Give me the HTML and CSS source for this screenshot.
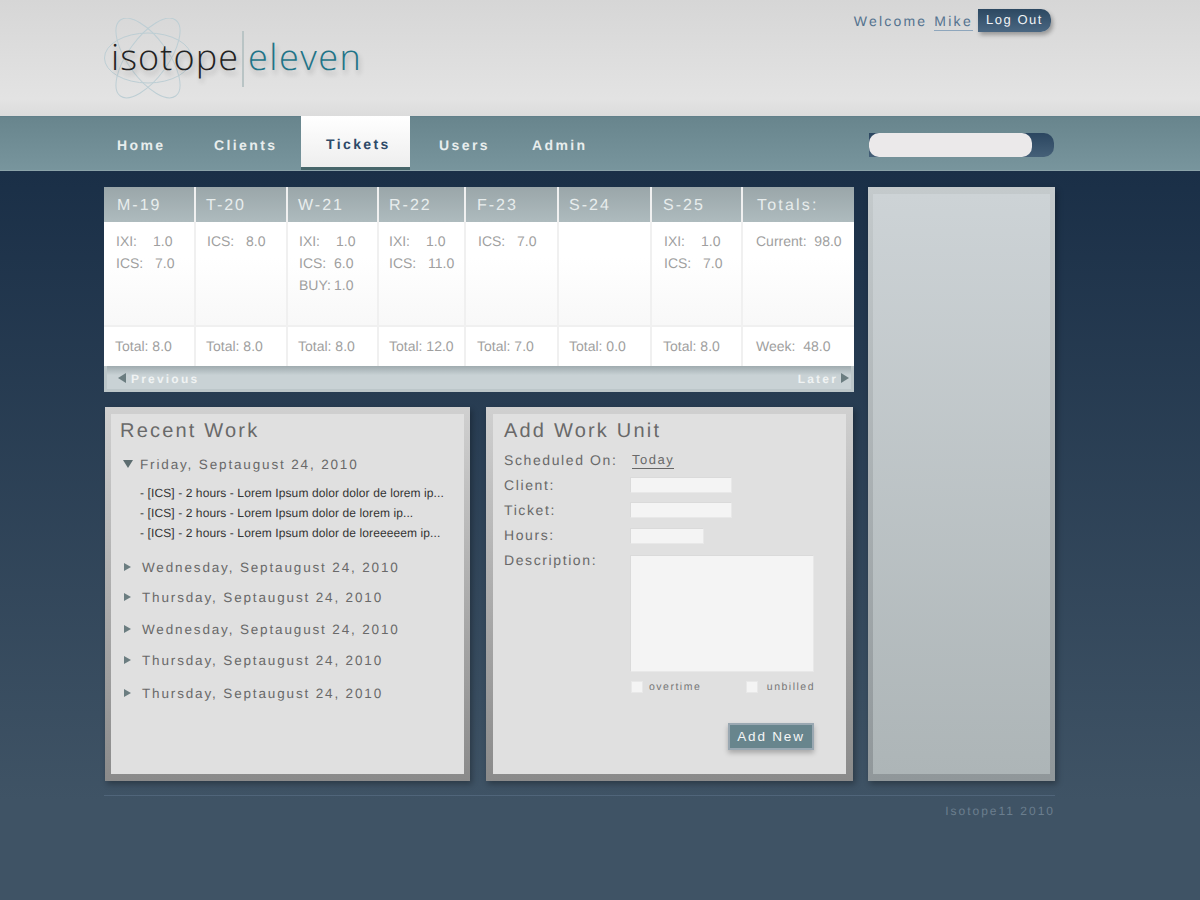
FILE: index.html
```html
<!DOCTYPE html>
<html lang="en">
<head>
    <meta charset="UTF-8">
    <title>Isotope Eleven</title>
    <link rel="stylesheet" href="styles.css">
</head>
<body>
<div id="header">
    <div class="wrap header-inner">
        <div class="logo">
            <svg class="logo-rings" width="90" height="82" viewBox="0 0 90 82">
                <g fill="none" stroke="#bdced4" stroke-width="1">
                    <ellipse cx="44" cy="40" rx="43.5" ry="25"/>
                    <ellipse cx="44" cy="40" rx="47" ry="20" transform="rotate(54 44 40)"/>
                    <ellipse cx="44" cy="40" rx="47" ry="20" transform="rotate(-54 44 40)"/>
                </g>
            </svg>
            <span class="logo-dark">isotope</span>
            <span class="logo-bar"></span>
            <span class="logo-teal">eleven</span>
        </div>
        <div class="welcome">
            <span>Welcome</span>
            <a class="user" href="#">Mike</a>
            <a class="logout" href="#">Log Out</a>
        </div>
    </div>
</div>
<div id="nav">
    <div class="wrap nav-inner">
        <ul class="menu">
            <li class="m-home"><a href="#">Home</a></li>
            <li class="m-clients"><a href="#">Clients</a></li>
            <li class="m-tickets active"><a href="#">Tickets</a></li>
            <li class="m-users"><a href="#">Users</a></li>
            <li class="m-admin"><a href="#">Admin</a></li>
        </ul>
        <div class="search"><input type="text"></div>
    </div>
</div>
<div class="wrap main">
    <div class="left">
        <div class="week">
            <div class="day">
                <div class="day-head">M-19</div>
                <div class="day-body"><p><span class="k">IXI:</span><span>1.0</span></p><p><span class="k ics">ICS:</span><span>7.0</span></p></div>
                <div class="day-total">Total: 8.0</div>
            </div>
            <div class="day">
                <div class="day-head">T-20</div>
                <div class="day-body"><p><span class="k ics">ICS:</span><span>8.0</span></p></div>
                <div class="day-total">Total: 8.0</div>
            </div>
            <div class="day">
                <div class="day-head">W-21</div>
                <div class="day-body"><p><span class="k">IXI:</span><span>1.0</span></p><p><span class="k tight">ICS:</span><span>6.0</span></p><p><span class="k tight">BUY:</span><span>1.0</span></p></div>
                <div class="day-total">Total: 8.0</div>
            </div>
            <div class="day">
                <div class="day-head">R-22</div>
                <div class="day-body"><p><span class="k">IXI:</span><span>1.0</span></p><p><span class="k ics">ICS:</span><span>11.0</span></p></div>
                <div class="day-total">Total: 12.0</div>
            </div>
            <div class="day">
                <div class="day-head">F-23</div>
                <div class="day-body"><p><span class="k ics">ICS:</span><span>7.0</span></p></div>
                <div class="day-total">Total: 7.0</div>
            </div>
            <div class="day">
                <div class="day-head">S-24</div>
                <div class="day-body"></div>
                <div class="day-total">Total: 0.0</div>
            </div>
            <div class="day">
                <div class="day-head">S-25</div>
                <div class="day-body"><p><span class="k">IXI:</span><span>1.0</span></p><p><span class="k ics">ICS:</span><span>7.0</span></p></div>
                <div class="day-total">Total: 8.0</div>
            </div>
            <div class="day totals">
                <div class="day-head">Totals:</div>
                <div class="day-body"><p>Current:&nbsp; 98.0</p></div>
                <div class="day-total">Week:&nbsp; 48.0</div>
            </div>
        </div>
        <div class="pager">
            <a href="#"><i class="tri-left"></i>Previous</a>
            <a href="#">Later<i class="tri-right"></i></a>
        </div>
        <div class="panels">
            <div class="panel">
                <div class="panel-in">
                    <h2>Recent Work</h2>
                    <div class="date open"><i class="tri-down"></i>Friday, Septaugust 24, 2010</div>
                    <ul class="work">
                        <li>- [ICS] - 2 hours - Lorem Ipsum dolor dolor de lorem ip...</li>
                        <li>- [ICS] - 2 hours - Lorem Ipsum dolor de lorem ip...</li>
                        <li>- [ICS] - 2 hours - Lorem Ipsum dolor de loreeeeem ip...</li>
                    </ul>
                    <div class="date"><i class="tri-small"></i>Wednesday, Septaugust 24, 2010</div>
                    <div class="date"><i class="tri-small"></i>Thursday, Septaugust 24, 2010</div>
                    <div class="date"><i class="tri-small"></i>Wednesday, Septaugust 24, 2010</div>
                    <div class="date"><i class="tri-small"></i>Thursday, Septaugust 24, 2010</div>
                    <div class="date"><i class="tri-small"></i>Thursday, Septaugust 24, 2010</div>
                </div>
            </div>
            <div class="panel">
                <div class="panel-in">
                    <h2>Add Work Unit</h2>
                    <form class="form">
                        <label>Scheduled On:</label><div class="today"><a href="#">Today</a></div>
                        <label>Client:</label><div><input class="inp up" type="text"></div>
                        <label>Ticket:</label><div><input class="inp up" type="text"></div>
                        <label>Hours:</label><div><input class="inp short" type="text"></div>
                        <label>Description:</label>
                        <div>
                            <textarea class="desc"></textarea>
                            <div class="checks">
                                <span><input type="checkbox">overtime</span>
                                <span><input type="checkbox">unbilled</span>
                            </div>
                            <div class="actions"><button type="button" class="add">Add New</button></div>
                        </div>
                    </form>
                </div>
            </div>
        </div>
    </div>
    <div class="side"><div class="side-in"></div></div>
</div>
<div class="wrap footer">Isotope11 2010</div>
</body>
</html>
```
FILE: styles.css
```css
* {
    padding: 0;
    margin: 0;
    list-style: none;
    box-sizing: border-box;
}
html, body {
    height: 900px;
    overflow: hidden;
}
body {
    font-family: "Liberation Sans", Arial, sans-serif;
    text-rendering: geometricPrecision;
    background: linear-gradient(#1a2f47 171px, #3f5365 800px);
}
a {
    text-decoration: none;
    color: inherit;
}
.wrap {
    width: 951px;
    margin-left: 104px;
}

/* header */
#header {
    height: 116px;
    background: linear-gradient(#d6d6d6, #e3e3e3 85%, #dcdcdc);
}
.header-inner {
    display: flex;
    justify-content: space-between;
    align-items: flex-start;
}
.logo {
    display: flex;
    align-items: center;
    height: 88px;
    margin-top: 15px;
    font-family: "Open Sans", sans-serif;
    font-weight: 300;
    font-size: 36px;
    letter-spacing: 1.1px;
    position: relative;
    padding-left: 7px;
}
.logo-rings {
    position: absolute;
    left: 0;
    top: 3px;
}
.logo-dark {
    margin-top: -6px;
    color: #222;
    text-shadow: 2px 4px 5px rgba(0, 0, 0, .2);
    position: relative;
}
.logo-teal {
    margin-top: -6px;
    letter-spacing: 1.5px;
    color: #1f7488;
    text-shadow: 2px 4px 5px rgba(0, 0, 0, .2);
    position: relative;
}
.logo-bar {
    width: 2px;
    height: 56px;
    margin: 0 4px 0 3px;
    background: #b9c4c5;
    position: relative;
}
.welcome {
    display: flex;
    align-items: flex-start;
    margin-top: 9px;
    padding-right: 4px;
    color: #55738f;
    font-size: 14px;
    letter-spacing: 2.2px;
}
.welcome > span {
    margin-top: 4px;
}
.user {
    margin: 4px 5px 0 7px;
    border-bottom: 1px solid #8ea6bc;
    line-height: 17px;
    letter-spacing: 2.3px;
}
.logout {
    width: 73px;
    height: 23px;
    line-height: 21px;
    text-align: center;
    font-size: 13px;
    letter-spacing: 1.5px;
    color: #f2f4f6;
    background: linear-gradient(#2c4861, #4a6782);
    border-radius: 0 10px 10px 0;
    box-shadow: 2px 3px 4px rgba(0, 0, 0, .3);
}

/* nav */
#nav {
    height: 55px;
    background: linear-gradient(#68858d, #78959d);
    border-top: 1px solid #62808a;
    border-bottom: 1px solid #8ba3a9;
}
.nav-inner {
    display: flex;
    justify-content: space-between;
}
.menu {
    display: flex;
    font-size: 14px;
    font-weight: bold;
    letter-spacing: 2.4px;
    color: #e8eded;
}
.menu a {
    display: block;
    padding-top: 20px;
}
.m-home { width: 110px; padding-left: 13px; }
.m-clients { width: 87px; }
.m-tickets { width: 109px; }
.m-users { width: 93px; padding-left: 29px; }
.m-admin { padding-left: 29px; }
.menu .active {
    height: 54px;
    margin-top: -1px;
    background: linear-gradient(#fff, #eee);
    border-bottom: 3px solid #47666a;
    padding-left: 25px;
    color: #2e4a68;
}
.search {
    width: 185px;
    height: 24px;
    margin: 16px 1px 0 0;
    border-radius: 0 10px 10px 0;
    background: linear-gradient(#2b4660, #456078);
}
.search input {
    display: block;
    width: 163px;
    height: 24px;
    border: 0;
    border-radius: 10px;
    background: #ebe9ea;
}

/* main */
.main {
    display: flex;
    gap: 14px;
    height: 610px;
    padding-top: 16px;
}
.left {
    width: 750px;
}
.week {
    display: flex;
    background: #f0f0f0;
}
.day {
    display: flex;
    flex-direction: column;
    border-right: 2px solid #f0f0f0;
    color: #9f9f9f;
    font-size: 14px;
}
.day:nth-child(1) { width: 92px; }
.day:nth-child(2) { width: 92px; }
.day:nth-child(3) { width: 91px; }
.day:nth-child(4) { width: 87px; }
.day:nth-child(5) { width: 93px; }
.day:nth-child(6) { width: 93px; }
.day:nth-child(7) { width: 91px; }
.day:nth-child(8) { width: 111px; border-right: 0; }
.day-head {
    height: 35px;
    padding: 10px 0 0 10px;
    font-size: 16px;
    letter-spacing: 2px;
    color: #e8eded;
    background: linear-gradient(#9aa6a9, #aebbbe);
}
.day:nth-child(1) .day-head { padding-left: 13px; }
.day:nth-child(5) .day-head, .day:nth-child(7) .day-head { padding-left: 11px; }
.day-body {
    height: 103px;
    padding: 8px 0 0 11px;
    background: linear-gradient(#fff 35%, #f8f8f8);
    line-height: 22px;
}
.day:nth-child(1) .day-body,
.day:nth-child(5) .day-body,
.day:nth-child(7) .day-body { padding-left: 12px; }
.day:nth-child(4) .day-body { padding-left: 10px; }
.day-body p {
    display: flex;
}
.k { width: 37px; }
.k.ics { width: 39px; }
.k.tight { width: 35px; }
.day-total {
    height: 39px;
    margin-top: 2px;
    padding: 11px 0 0 10px;
    background: #fff;
}
.day:nth-child(1) .day-total,
.day:nth-child(5) .day-total,
.day:nth-child(7) .day-total { padding-left: 11px; }
.day.totals .day-head { padding-left: 14px; letter-spacing: 2.2px; }
.day.totals .day-body { padding-left: 13px; }
.day.totals .day-total { padding-left: 13px; }
.pager {
    display: flex;
    justify-content: space-between;
    height: 26px;
    padding: 6px 2px 0 11px;
    border: 3px solid #bcc6c9;
    border-top: 0;
    background: linear-gradient(#9fabaf, #c9d2d5 40%);
    font-size: 12px;
    font-weight: bold;
    letter-spacing: 2.2px;
    color: #f0f3f3;
}
.tri-left, .tri-right, .tri-down, .tri-small {
    display: inline-block;
    width: 0;
    height: 0;
    border-style: solid;
    border-color: transparent;
}
.tri-left {
    border-width: 5px 8px 5px 0;
    border-right-color: #6b7d80;
    margin-right: 5px;
}
.tri-right {
    border-width: 5px 0 5px 8px;
    border-left-color: #6b7d80;
    margin-left: 3px;
}
.panels {
    display: flex;
    gap: 16px;
    margin: 15px 0 0 1px;
}
.panel {
    flex: none;
    width: 365px;
    height: 374px;
    padding: 7px 6px;
    background: linear-gradient(#d0d0d0, #8a8a8a);
    box-shadow: 2px 3px 6px rgba(0, 0, 0, .3);
}
.panel + .panel {
    width: 367px;
    padding: 7px;
}
.panel-in {
    height: 100%;
    padding: 5px 0 0 9px;
    background: #e0e0e0;
    color: #696969;
}
.panel + .panel .panel-in {
    padding-left: 11px;
}
h2 {
    font-size: 20px;
    font-weight: normal;
    letter-spacing: 2.2px;
    line-height: 24px;
}
.date {
    display: flex;
    align-items: center;
    height: 31px;
    font-size: 13.5px;
    letter-spacing: 1.85px;
    padding-left: 4px;
}
.date.open {
    margin-top: 10px;
    height: 22px;
    padding-left: 3px;
}
.date:nth-child(5) { margin-top: -1px; }
.date:nth-child(6) { margin-top: 1px; }
.date:nth-child(8) { margin-top: 2px; }
.tri-down {
    border-width: 8px 5px 0 5px;
    border-top-color: #5d6d70;
    margin-right: 7px;
}
.tri-small {
    border-width: 4.5px 0 4.5px 7px;
    border-left-color: #6b7d80;
    margin: -2px 11px 0 0;
}
.work {
    margin: 8px 0 9px 20px;
    font-size: 12px;
    letter-spacing: .1px;
    line-height: 20px;
    color: #333;
    white-space: nowrap;
}

/* form */
.form {
    display: grid;
    grid-template-columns: 126px 1fr;
    grid-auto-rows: 25px;
    margin-top: 5px;
    font-size: 14px;
    letter-spacing: 1.6px;
}
.form label {
    line-height: 25px;
}
.today {
    font-size: 13px;
    letter-spacing: 1.5px;
    padding: 4px 0 0 2px;
}
.today a {
    border-bottom: 1px solid #666;
    line-height: 16px;
    display: inline-block;
}
.inp, .desc {
    display: block;
    border: 1px solid #e8e8e8;
    border-color: #dadada #e8e8e8 #e8e8e8 #dadada;
    background: #f4f4f4;
    border-radius: 0;
    outline: 0;
}
.inp {
    width: 102px;
    height: 16px;
    margin-top: 5px;
}
.inp.up {
    margin-top: 4px;
}
.short {
    width: 74px;
}
.desc {
    width: 184px;
    height: 117px;
    margin-top: 7px;
    resize: none;
}
.checks {
    display: flex;
    justify-content: space-between;
    width: 185px;
    margin-top: 8px;
    font-size: 10.5px;
    letter-spacing: 1.5px;
    line-height: 14px;
    color: #777;
}
.checks input {
    appearance: none;
    width: 12px;
    height: 12px;
    margin: 1px 6px 0 1px;
    border: 1px solid #e8e8e8;
    background: #f4f4f4;
    float: left;
}
.checks span + span input {
    margin-right: 9px;
}
.actions {
    display: flex;
    justify-content: flex-end;
    width: 184px;
    margin-top: 29px;
}
.add {
    width: 86px;
    height: 27px;
    border: 2px solid #9aa8b2;
    background: #68858d;
    color: #f4f6f6;
    font-family: "Liberation Sans", Arial, sans-serif;
    font-size: 13.5px;
    letter-spacing: 1.8px;
    box-shadow: 0 3px 5px rgba(0, 0, 0, .25);
}

/* side */
.side {
    width: 187px;
    height: 594px;
    padding: 7px 5px;
    background: linear-gradient(#c4cacc, #90979a);
    box-shadow: 2px 3px 6px rgba(0, 0, 0, .3);
}
.side-in {
    height: 100%;
    background: linear-gradient(#cdd3d6, #adb5b7);
}

/* footer */
.footer {
    margin-top: 14px;
    height: 30px;
    padding-top: 8px;
    border-top: 1px solid #50657a;
    text-align: right;
    font-size: 12px;
    letter-spacing: 2px;
    color: #6b7e8e;
}
```
